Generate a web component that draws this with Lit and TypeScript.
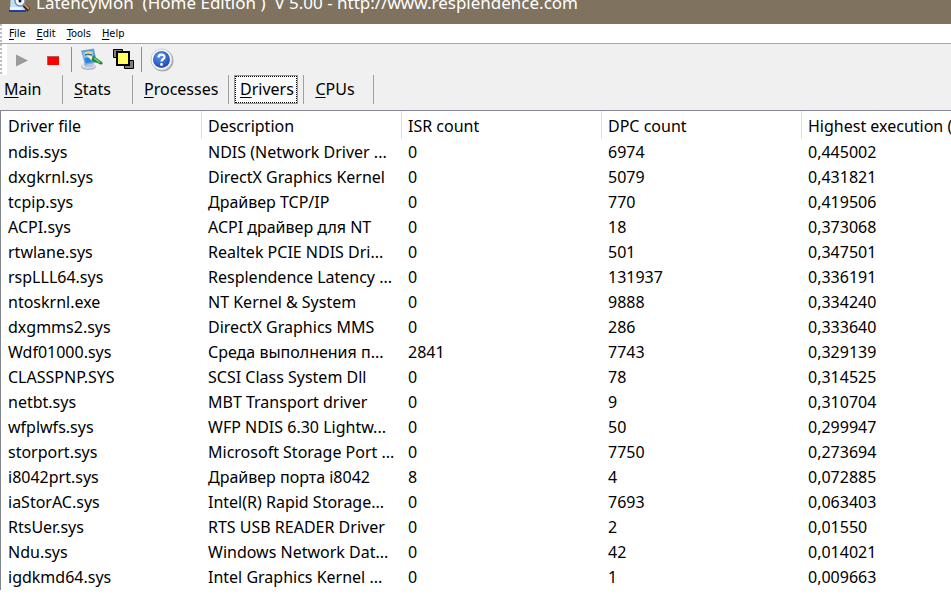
import { LitElement, html, css, svg } from "lit";
import { customElement, state } from "lit/decorators.js";
import { classMap } from "lit/directives/class-map.js";

type Row = [string, string, string, string, string];

const COLUMNS = ["Driver file", "Description", "ISR count", "DPC count", "Highest execution ("];

const ROWS: Row[] = [
  ["ndis.sys", "NDIS (Network Driver ...", "0", "6974", "0,445002"],
  ["dxgkrnl.sys", "DirectX Graphics Kernel", "0", "5079", "0,431821"],
  ["tcpip.sys", "Драйвер TCP/IP", "0", "770", "0,419506"],
  ["ACPI.sys", "ACPI драйвер для NT", "0", "18", "0,373068"],
  ["rtwlane.sys", "Realtek PCIE NDIS Dri...", "0", "501", "0,347501"],
  ["rspLLL64.sys", "Resplendence Latency ...", "0", "131937", "0,336191"],
  ["ntoskrnl.exe", "NT Kernel & System", "0", "9888", "0,334240"],
  ["dxgmms2.sys", "DirectX Graphics MMS", "0", "286", "0,333640"],
  ["Wdf01000.sys", "Среда выполнения п...", "2841", "7743", "0,329139"],
  ["CLASSPNP.SYS", "SCSI Class System Dll", "0", "78", "0,314525"],
  ["netbt.sys", "MBT Transport driver", "0", "9", "0,310704"],
  ["wfplwfs.sys", "WFP NDIS 6.30 Lightw...", "0", "50", "0,299947"],
  ["storport.sys", "Microsoft Storage Port ...", "0", "7750", "0,273694"],
  ["i8042prt.sys", "Драйвер порта i8042", "8", "4", "0,072885"],
  ["iaStorAC.sys", "Intel(R) Rapid Storage...", "0", "7693", "0,063403"],
  ["RtsUer.sys", "RTS USB READER Driver", "0", "2", "0,01550"],
  ["Ndu.sys", "Windows Network Dat...", "0", "42", "0,014021"],
  ["igdkmd64.sys", "Intel Graphics Kernel ...", "0", "1", "0,009663"],
];

const MENUS = ["File", "Edit", "Tools", "Help"];
const TABS = ["Main", "Stats", "Processes", "Drivers", "CPUs"];

const mnemonic = (s: string) => html`<u>${s[0]}</u>${s.slice(1)}`;

const playIcon = svg`<svg width="24" height="24" viewBox="0 0 24 24"><path d="M6 6.5 18 12.5 6 18.5z" fill="#9b9b9b"/></svg>`;
const stopIcon = svg`<svg width="24" height="24" viewBox="0 0 24 24"><path d="M5 8h12v9H5z" fill="#fe0000"/><path d="M5.500 17V8.500H17" fill="none" stroke="#b06058"/></svg>`;
const optionsIcon = svg`<svg width="24" height="24" viewBox="0 0 24 24">
  <ellipse cx="8.500" cy="18.500" rx="7.500" ry="3.500" fill="#a9afbf"/><ellipse cx="8.500" cy="17.700" rx="7" ry="3" fill="#dfe3ee"/>
  <path d="M4 14h9l1 4c-2 2-8 2-10 0z" fill="#bcc5da"/>
  <path d="M1 2.500 14 0.500l3 14-12 2.500z" fill="#7fa6d6"/><path d="M2.200 3.500 13.200 1.800l2.500 11.500-9.700 2z" fill="#2486dc"/>
  <path d="M2.500 4 12.800 2.500l1 5-9.800 3z" fill="#7cc6f4"/><ellipse cx="8.500" cy="5.500" rx="3.500" ry="2" fill="#efdc74"/><path d="m5 7 3-1 4 1" stroke="#1c4a80" fill="none"/>
  <path d="m7 8 5 0 3 3.500-3.500 1z" fill="#f0ecd0"/><path d="m13 7.500 9 6.500c1.500 1.500.5 3-1.500 2.500L11.500 12z" fill="#1c8a2c"/><path d="m14 10 6 4.500" stroke="#74d878" stroke-width="1.500"/></svg>`;
const windowsIcon = svg`<svg width="24" height="24" viewBox="0 0 24 24" stroke="#000">
  <path d="M1.500 1.500h9v8h-9z" fill="#808080"/><path d="M12.500 12.500h9v8h-9z" fill="#808080"/>
  <path d="M5 4h12v13H5z" fill="#ffff60" stroke-width="2"/><path d="M7 7.500h8M7 10.500h8M7 13.500h8" stroke="#fffcc0" stroke-dasharray="1 1"/></svg>`;
const helpIcon = svg`<svg width="24" height="24" viewBox="0 0 24 24">
  <defs><radialGradient id="hb" cx=".4" cy=".3" r=".75"><stop offset="0" stop-color="#5d96ec"/><stop offset="1" stop-color="#1746b4"/></radialGradient></defs>
  <circle cx="12.500" cy="12.500" r="11" fill="#a8a8ae"/><circle cx="11.500" cy="11.500" r="10.500" fill="#fafbff" stroke="#c9ccd4"/>
  <circle cx="11.500" cy="11.500" r="8.500" fill="url(#hb)"/>
  <path d="M8.500 9.500C8.500 5.800 14.500 5.800 14.500 9c0 2.300-3 2.200-3 4.500" fill="none" stroke="#fff" stroke-width="2.200"/><circle cx="11.500" cy="16.500" r="1.400" fill="#fff"/></svg>`;
const appIcon = svg`<svg width="24" height="24" viewBox="0 0 24 24">
  <path d="M3 0h14v21H2z" fill="#c5ddf5"/><path d="M1 20h17v2H1z" fill="#1d3f9c"/><path d="M2 17h10l3 3H2z" fill="#e8f3fd"/>
  <circle cx="12" cy="11" r="5" fill="#f4faff" stroke="#6f8dac" stroke-width="1.500"/><circle cx="12" cy="11" r="1.500" fill="#101820"/>
  <path d="m16 15 5 5" stroke="#2c2119" stroke-width="4"/><path d="m16 14 5 5" stroke="#c88f5d" stroke-width="2"/></svg>`;

@customElement("app-root")
export class AppRoot extends LitElement {
  @state() private active = "Drivers";

  static styles = css`
    :host { display: block; overflow: hidden; min-height: 100vh; background: #fff; color: #000; font-family: "Noto Sans", sans-serif; font-size: 16px; }
    button { font: inherit; color: inherit; border: 0; padding: 0; margin: 0; background: none; white-space: nowrap; }
    u { text-underline-offset: 2px; text-decoration-thickness: 1px; }
    svg { display: block; }
    .title { height: 24px; display: flex; align-items: flex-end; gap: 4px; padding-left: 8px; background: #7f735f; color: #fff; overflow: hidden; }
    .title svg { align-self: flex-start; margin-top: -10px; flex: none; }
    .title h1 { margin: 0; font: 400 17px/32px "Noto Sans", sans-serif; height: 37px; white-space: pre; }
    .grip { align-self: stretch; background: repeating-linear-gradient(#bbb 0 2px, #fff 2px 4px) 0 0 / 2px 100% no-repeat #fff; }
    .menu { height: 19px; display: flex; align-items: center; gap: 11px; border-bottom: 1px solid #a9a9a9; font-family: "DejaVu Sans Condensed", sans-serif; font-size: 11px; }
    .menu .grip { width: 2px; margin-right: -4px; }
    .chrome { background: #f0f0f0; }
    .tools { height: 31px; display: flex; align-items: center; }
    .tools .grip { width: 7px; margin-right: 3px; }
    .tool + .tool { margin-left: 8px; }
    .sep { width: 1px; height: 25px; background: #8c8c8c; margin: 0 8px 0 5px; }
    .tabs { height: 35px; display: flex; align-items: flex-start; }
    .cell { height: 29px; box-sizing: border-box; border-right: 1px solid #a0a0a0; display: flex; align-items: center; padding: 0 10px 0 11px; min-width: 70px; }
    .cell button { height: 27px; line-height: 27px; }
    .cell:first-child { padding-left: 4px; min-width: 63px; }
    .cell.wide { min-width: 96px; }
    .cell.on { padding: 0 6px; min-width: 75px; }
    .cell.on button { flex: 1; line-height: 25px; padding-left: 1px; background: #fafafa; border: 1px dotted #000; outline: 1px solid #999; }
    table { width: 100%; border-collapse: separate; border-spacing: 0; table-layout: fixed; border-top: 1px solid #828790; border-left: 1px solid #828790; }
    th, td { padding: 0 0 0 7px; text-align: left; font-weight: 400; white-space: nowrap; height: 25px; line-height: 25px; }
    th { padding-top: 2px; height: 27px; }
    th + th { background: linear-gradient(#e0e0e0, #e0e0e0) 0 0 / 1px 28px no-repeat; }
    col.fixed { width: 200px; }
  `;

  render() {
    return html`
      <header class="title">${appIcon}<h1>LatencyMon  (Home Edition )  V 5.00 - http://www.resplendence.com</h1></header>
      <nav class="menu"><span class="grip"></span>${MENUS.map((m) => html`<button>${mnemonic(m)}</button>`)}</nav>
      <div class="chrome">
        <div class="tools">
          <span class="grip"></span>
          <button class="tool" aria-label="Start">${playIcon}</button>
          <button class="tool" aria-label="Stop">${stopIcon}</button>
          <span class="sep"></span>
          <button class="tool" aria-label="Options">${optionsIcon}</button>
          <button class="tool" aria-label="Windows">${windowsIcon}</button>
          <span class="sep"></span>
          <button class="tool" aria-label="Help">${helpIcon}</button>
        </div>
        <div class="tabs">
          ${TABS.map((t) => html`<div class=${classMap({ cell: true, on: t === this.active, wide: t === "Processes" })}>
            <button @click=${() => (this.active = t)}>${mnemonic(t)}</button></div>`)}
        </div>
      </div>
      <table>
        <colgroup><col class="fixed"><col class="fixed"><col class="fixed"><col class="fixed"><col></colgroup>
        <thead><tr>${COLUMNS.map((c) => html`<th scope="col">${c}</th>`)}</tr></thead>
        <tbody>${ROWS.map((r) => html`<tr>${r.map((c) => html`<td>${c}</td>`)}</tr>`)}</tbody>
      </table>
    `;
  }
}
